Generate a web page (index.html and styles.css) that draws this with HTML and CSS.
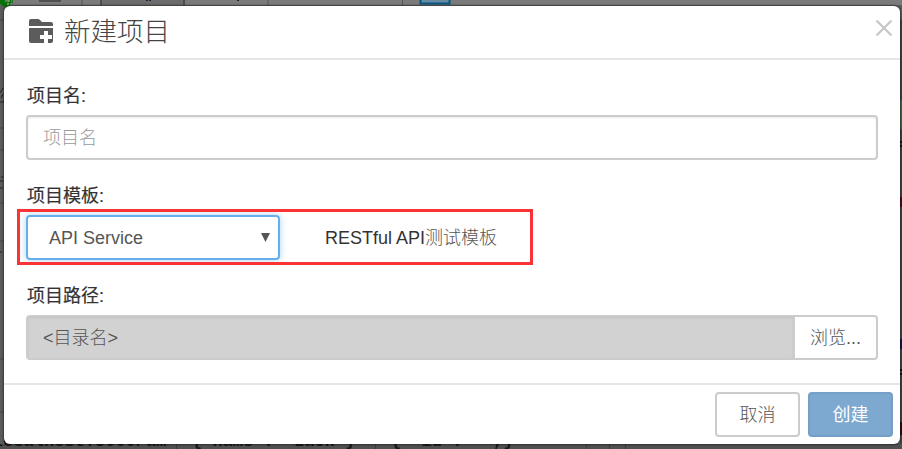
FILE: index.html
```
<!DOCTYPE html>
<html lang="zh-CN">
<head>
<meta charset="utf-8">
<title>新建项目</title>
<link rel="stylesheet" href="styles.css">
</head>
<body>
<svg class="workspace" width="902" height="449" viewBox="0 0 902 449" aria-hidden="true">
  <rect width="902" height="449" fill="#5c5c5c"/>
  <rect width="902" height="6" fill="#7b7b7b"/>
  <rect x="101" width="83" height="6" fill="#6c6c6c"/>
  <path d="M82 0V6M268 0V6M402.500 0V6" stroke="#555"/>
  <path d="M101 0V6M184 0V6" stroke="#4d4d4d" stroke-width="2"/>
  <path d="M0 5.500H902" stroke="#606060"/>
  <rect x="39" width="22" height="2" fill="#505050"/>
  <path d="M146 .5h2M149 .5h2M237 .5h2" stroke="#222040"/>
  <rect x="420.500" y="-5" width="29" height="8.500" fill="#668ba5" stroke="#075582" stroke-width="2"/>
  <circle cx="6" cy="0" r="7" fill="#087008"/>
  <path d="M5 1h7M7 4h5M8 0v5" stroke="#9aac9a" stroke-dasharray="2 1"/>
  <path d="M0 20H4M0 128H4M0 150H4M0 203H4M0 241H4M0 359H4M0 412H4" stroke="#484848"/>
  <path d="M0 93l3-5M1 98l2-4M0 102h4M1 177h2M0 181h3M0 188h3M0 252h2" stroke="#222"/>
  <rect x="900" y="20" width="2" height="429" fill="#444"/>
  <rect x="900" y="100" width="2" height="29" fill="#3e6b48"/>
  <path d="M900 142h2M900 146h2M900 370h2M900 374h2" stroke="#000" stroke-width="1.500"/>
  <rect x="900" y="197" width="2" height="10" fill="#47101a"/>
  <rect x="900" y="339" width="2" height="10" fill="#13135b"/>
  <rect x="900" y="422" width="2" height="13" fill="#211306"/>
  <rect y="444" width="902" height="5" fill="#505050"/>
  <path d="M176.500 444v5M375.500 444v5M586.500 444v5M609.500 444v5M625.500 444v5" stroke="#3d3d3d"/>
  <g class="code">
    <text x="-7" y="445.500">localhost:5000/am</text>
    <text x="192" y="445.500">{"name": "Lack"}</text>
    <text x="391" y="445.500">{ "id": "",}</text>
  </g>
</svg>
<section class="dialog">
  <header class="dialog-header">
    <svg class="folder" width="24" height="24" viewBox="0 0 24 24">
      <path d="M0 7V2Q0 0 2 0H9Q10 0 11 1L13 3H22Q24 3 24 5V7Z"/>
      <path d="M0 9H24V22Q24 24 22 24H2Q0 24 0 22Z"/>
      <path class="plus" d="M15 12h4v4h4v4h-4v4h-4v-4h-4v-4h4Z"/>
    </svg>
    <h1>新建项目</h1>
    <svg class="close" width="18" height="18" viewBox="0 0 18 18"><path d="M1.500 1.500L16.500 16.500M16.500 1.500L1.500 16.500"/></svg>
  </header>
  <main class="dialog-body">
    <div class="label">项目名:</div>
    <div class="field"><span class="placeholder">项目名</span></div>
    <div class="label">项目模板:</div>
    <div class="template-row">
      <div class="select"><span>API Service</span><svg width="9" height="9" viewBox="0 0 9 9"><path d="M0 0H9L4.500 9Z"/></svg></div>
      <div class="hint">RESTful API<span>测试模板</span></div>
      <div class="highlight"></div>
    </div>
    <div class="label">项目路径:</div>
    <div class="path-row">
      <div class="field path"><span>&lt;目录名&gt;</span></div>
      <div class="browse">浏览...</div>
    </div>
  </main>
  <footer class="dialog-footer">
    <div class="button">取消</div>
    <div class="button primary">创建</div>
  </footer>
</section>
</body>
</html>
```
FILE: styles.css
```
* { box-sizing: border-box; }
body {
  margin: 0;
  width: 902px;
  height: 449px;
  overflow: hidden;
  padding: 6px 2px 5px 4px;
  font: 300 18px/26px "Liberation Sans", "Noto Sans CJK SC", sans-serif;
  color: #555;
}
.workspace { position: absolute; top: 0; left: 0; }
.code { font: bold 17px "Liberation Mono", monospace; fill: #171717; }
.dialog {
  position: relative;
  width: 896px;
  height: 438px;
  background: #fff;
  border-radius: 6px;
  box-shadow: 0 0 2px 1px rgba(0, 0, 0, .4);
}
.dialog-header {
  display: flex;
  height: 54px;
  padding: 13px 7px 0 25px;
  border-bottom: 2px solid #e5e5e5;
}
.folder { fill: #5c5c5c; }
.folder .plus { fill: #fff; }
h1 { margin: 0 0 0 11px; font-size: 26.5px; line-height: 26px; font-weight: 300; color: #444; }
.close { margin: 0 0 0 auto; stroke: #c6c6c6; stroke-width: 2.200; }
.dialog-body { height: 323px; padding: 23px 22px 0; }
.label { height: 32px; padding-left: 1px; font-weight: 400; -webkit-text-stroke: .2px #333; color: #333; }
.field {
  height: 45px;
  padding: 8px 15px;
  border: 2px solid #ccc;
  border-radius: 4px;
  box-shadow: inset 0 1px 2px rgba(0, 0, 0, .08);
}
.field + .label, .template-row + .label { margin-top: 23px; }
.placeholder { color: #999; }
.template-row { position: relative; display: flex; height: 45px; }
.select {
  display: flex;
  justify-content: space-between;
  align-items: center;
  width: 254px;
  border: 2px solid #66afe9;
  border-radius: 4px;
  padding: 0 8px 0 21px;
  box-shadow: 0 0 7px rgba(102, 175, 233, .55);
}
.select svg { fill: #555; }
.hint { padding: 10px 0 0 45px; color: #333; }
.hint span { color: #555; }
.highlight { position: absolute; left: -9px; top: -6px; width: 516px; height: 56px; border: 3px solid #fa3434; }
.path-row { display: flex; height: 45px; }
.path { flex: 1; background: #d2d2d2; border-radius: 4px 0 0 4px; }
.browse { width: 83px; padding: 8px 0 0 15px; border: 2px solid #ccc; border-left: 0; border-radius: 0 4px 4px 0; }
.dialog-footer {
  display: flex;
  justify-content: flex-end;
  gap: 8px;
  height: 61px;
  padding: 7px 7px 0;
  border-top: 2px solid #e5e5e5;
}
.button { width: 85px; height: 45px; padding-top: 8px; text-align: center; border: 2px solid #ccc; border-radius: 4px; }
.primary { color: #fff; background: #7da8d0; border-color: #759fc8; font-weight: 400; }
```
